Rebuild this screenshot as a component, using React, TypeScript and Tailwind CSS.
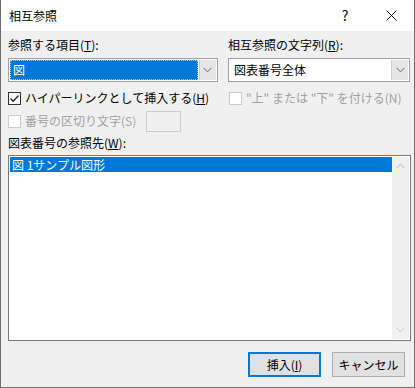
import React from "react";

const font = { fontFamily: '"Noto Sans CJK JP", "Noto Sans", sans-serif' };

function ChevronDown({ color = "#606060" }: { color?: string }) {
  return (
    <svg width="9" height="6" viewBox="0 0 9 6">
      <path d="M0.5 0.8 L4.5 4.8 L8.5 0.8" fill="none" stroke={color} strokeWidth="1" />
    </svg>
  );
}

function ChevronUp({ color = "#c8c8c8" }: { color?: string }) {
  return (
    <svg width="9" height="6" viewBox="0 0 9 6">
      <path d="M0.5 5.2 L4.5 1.2 L8.5 5.2" fill="none" stroke={color} strokeWidth="1.2" />
    </svg>
  );
}

function Checkbox({ checked, disabled }: { checked?: boolean; disabled?: boolean }) {
  return (
    <div
      className={`w-[13px] h-[13px] border flex items-center justify-center bg-white ${
        disabled ? "border-[#cccccc]" : "border-[#333333]"
      }`}
    >
      {checked && (
        <svg width="11" height="11" viewBox="0 0 11 11">
          <path d="M1.5 5.5 L4.2 8.2 L9.5 2.5" fill="none" stroke="#222" strokeWidth="1.3" />
        </svg>
      )}
    </div>
  );
}

export default function App() {
  return (
    <div
      className="w-[415px] h-[388px] bg-[#f0f0f0] border-l border-r border-b border-[#707070] flex flex-col text-[12px] text-black"
      style={font}
    >
      {/* タイトルバー */}
      <div className="h-[31px] bg-white flex items-center justify-between pl-[8px]">
        <span className="text-[12px] leading-none">相互参照</span>
        <div className="flex items-center h-full">
          <span className="w-[46px] text-center text-[14px]">?</span>
          <span className="w-[46px] flex items-center justify-center">
            <svg width="11" height="11" viewBox="0 0 11 11">
              <path d="M0.5 0.5 L10.5 10.5 M10.5 0.5 L0.5 10.5" stroke="#111" strokeWidth="1" />
            </svg>
          </span>
        </div>
      </div>

      <div className="flex-1 flex flex-col pl-[7px] pr-[4px]">
        <div className="flex gap-[10px] mt-[6px]">
          {/* 左 */}
          <div className="w-[211px] flex flex-col">
            <div className="h-[16px] leading-[16px]">
              参照する項目(<span className="underline">T</span>):
            </div>
            <div className="mt-[5px] h-[24px] border border-[#a0a0a0] bg-white flex p-[1px]">
              <div className="flex-1 bg-[#0078d7] border border-dotted border-[#9ec9f0] flex items-center pl-[2px]">
                <span className="text-white leading-none">図</span>
              </div>
              <div className="w-[17px] ml-[1px] bg-[#e5e5e5] border-l border-[#cccccc] flex items-center justify-center">
                <ChevronDown />
              </div>
            </div>
          </div>
          {/* 右 */}
          <div className="w-[183px] flex flex-col">
            <div className="h-[16px] leading-[16px]">
              相互参照の文字列(<span className="underline">R</span>):
            </div>
            <div className="mt-[5px] h-[24px] border border-[#a0a0a0] bg-white flex">
              <div className="flex-1 flex items-center pl-[5px]">図表番号全体</div>
              <div className="w-[17px] my-[1px] mr-[1px] bg-[#e5e5e5] border-l border-[#cccccc] flex items-center justify-center">
                <ChevronDown />
              </div>
            </div>
          </div>
        </div>

        <div className="flex gap-[10px] mt-[8px]">
          <div className="w-[211px] flex flex-col">
            <div className="h-[16px] flex items-center gap-[4px]">
              <Checkbox checked />
              <span>
                ハイパーリンクとして挿入する(<span className="underline">H</span>)
              </span>
            </div>
            <div className="flex items-center mt-[4px] h-[22px]">
              <div className="flex items-center gap-[4px] text-[#a0a0a0]">
                <Checkbox disabled />
                <span>番号の区切り文字(S)</span>
              </div>
              <div className="ml-[10px] w-[35px] h-[21px] border border-[#cccccc] bg-[#f0f0f0]" />
            </div>
          </div>
          <div className="w-[183px] flex flex-col">
            <div className="h-[16px] flex items-center gap-[4px] text-[#a0a0a0] pl-[1px]">
              <Checkbox disabled />
              <span>"上" または "下" を付ける(N)</span>
            </div>
          </div>
        </div>

        <div className="h-[16px] leading-[16px] mt-[3px]">
          図表番号の参照先(<span className="underline">W</span>):
        </div>
        <div className="mt-[4px] w-[403px] h-[186px] border border-[#7a7a7a] bg-white flex p-[1px]">
          <div className="flex-1">
            <div className="h-[15px] bg-[#0078d7] text-white flex items-center pl-[2px] leading-none">
              図 1サンプル図形
            </div>
          </div>
          <div className="w-[17px] bg-[#f0f0f0] flex flex-col justify-between items-center py-[6px]">
            <ChevronUp />
            <ChevronDown color="#c8c8c8" />
          </div>
        </div>

        <div className="flex justify-end gap-[11px] mt-[11px] pr-[5px]">
          <button className="w-[73px] h-[25px] border-2 border-[#0078d7] bg-[#e1e1e1] flex items-center justify-center">
            挿入(<span className="underline">I</span>)
          </button>
          <button className="w-[73px] h-[25px] border border-[#adadad] bg-[#e1e1e1] flex items-center justify-center">
            キャンセル
          </button>
        </div>
      </div>
    </div>
  );
}
